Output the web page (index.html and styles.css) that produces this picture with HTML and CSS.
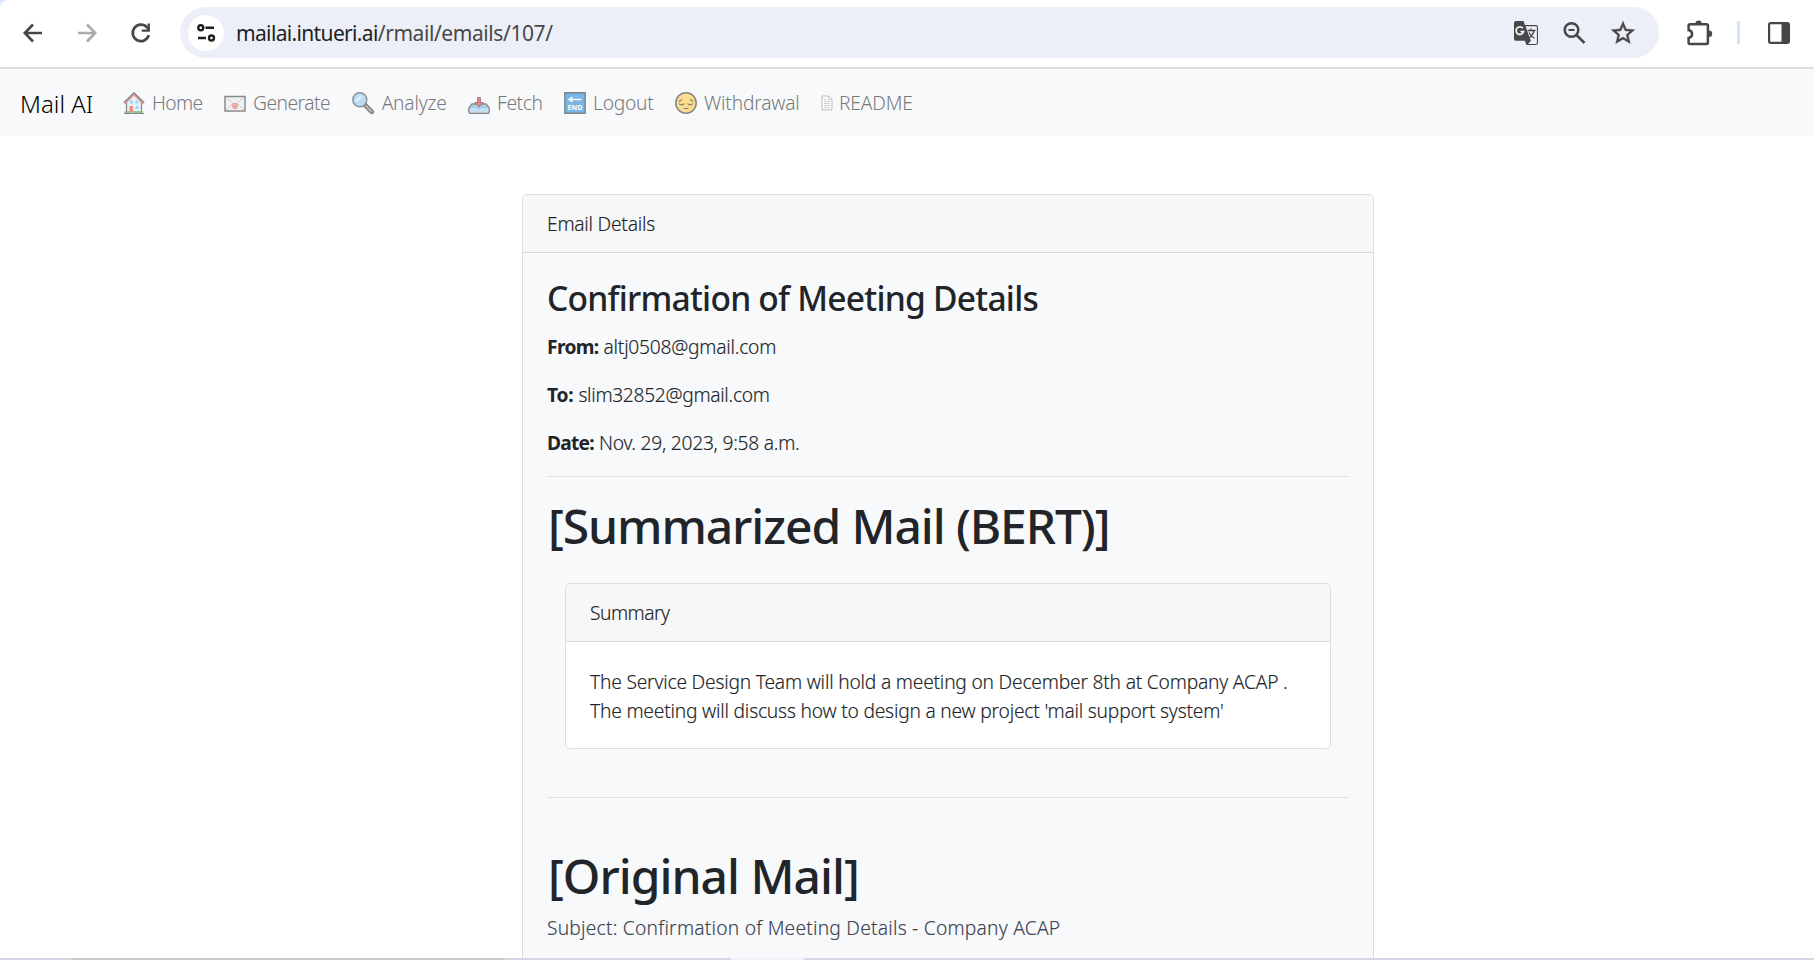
FILE: index.html
```
<!DOCTYPE html>
<html lang="en">
<head>
<meta charset="utf-8">
<title>Mail AI</title>
<link rel="stylesheet" href="styles.css">
</head>
<body>
<header class="toolbar">
  <div class="history">
    <svg class="ico" viewBox="0 0 24 24"><path d="M21 12H4M12 3.500 3.800 12l8.200 8.500" fill="none" stroke="#474747" stroke-width="2.600"/></svg>
    <svg class="ico" viewBox="0 0 24 24"><path d="M3 12h17M12 3.500 20.200 12 12 20.500" fill="none" stroke="#ababab" stroke-width="2.600"/></svg>
    <svg class="ico" viewBox="0 0 24 24"><path d="M19.800 14.200A8.200 8.200 0 1 1 18 6.400L20 8.600" fill="none" stroke="#474747" stroke-width="2.700"/><path d="M20.900 2.600v8.200h-8.200V8.400h5.800V2.600z" fill="#474747"/></svg>
  </div>
  <div class="omnibox">
    <span class="site-info">
      <svg width="20" height="20" viewBox="0 0 20 20" fill="none" stroke="#1f1f1f" stroke-width="2.400"><circle cx="4.800" cy="4.800" r="2.500"/><path d="M9.500 4.800H18M2 15h8"/><circle cx="15.500" cy="15" r="2.500"/></svg>
    </span>
    <span class="url"><span class="host">mailai.intueri.ai</span>/rmail/emails/107/</span>
    <div class="omni-actions">
      <svg width="26" height="26" viewBox="0 0 26 26"><path d="M3 1h7.500l1.400 4H23a2 2 0 0 1 2 2v16a2 2 0 0 1-2 2h-9.500l-1.700-4.200H3a2 2 0 0 1-2-2V3a2 2 0 0 1 2-2z" fill="#474747"/><path d="M12.500 6.200H23a.9.900 0 0 1 .9.900V23a.9.900 0 0 1-.9.900h-8l2.800-3.100z" fill="#eceff8"/><path d="M14.500 10.500h8M18 8.500v2M21 10.500c-.7 3.500-2.700 6-5.500 8M16 12.500c1.300 2.700 3.300 4.700 5.500 5.800M13.600 24l3.200-3.200" fill="none" stroke="#474747" stroke-width="1.300"/><path d="M9.800 8.200A3.800 3.800 0 1 0 10.600 11.600H7.500" fill="none" stroke="#eceff8" stroke-width="1.800"/></svg>
      <svg width="24" height="24" viewBox="0 0 24 24" fill="none" stroke="#474747" stroke-width="2.500"><circle cx="9.500" cy="9" r="6.800"/><path d="m14.500 14 8 8"/><path d="M6.500 9h6" stroke-width="2"/></svg>
      <svg width="28" height="28" viewBox="0 0 24 24"><path d="M22 9.240l-7.190-.62L12 2 9.190 8.630 2 9.240l5.460 4.730L5.820 21 12 17.270 18.180 21l-1.630-7.030L22 9.240zM12 15.400l-3.760 2.270 1-4.280-3.320-2.880 4.380-.38L12 6.100l1.710 4.040 4.380.38-3.320 2.880 1 4.280L12 15.400z" fill="#474747" stroke="#474747" stroke-width=".4"/></svg>
    </div>
  </div>
  <div class="tools">
    <svg width="28" height="28" viewBox="0 0 28 28"><path d="M5 5.200h16.500a1.400 1.400 0 0 1 1.400 1.400v17a1.400 1.400 0 0 1-1.400 1.400H5a1.400 1.400 0 0 1-1.400-1.400v-4.500c2.200-.4 3.500-2 3.500-4s-1.300-3.600-3.500-4V6.600A1.400 1.400 0 0 1 5 5.200z" fill="none" stroke="#474747" stroke-width="2.500"/><path d="M10.500 4.500a3.100 3.100 0 0 1 6.200 0zM24 11.500a3.200 3.200 0 0 1 0 6.400z" fill="#474747"/></svg>
    <span class="divider"></span>
    <svg width="22" height="22" viewBox="0 0 22 22"><rect x="1.100" y="1.100" width="19.800" height="19.800" rx="1.600" fill="none" stroke="#474747" stroke-width="2.200"/><path d="M13.500 1H20v20h-6.500z" fill="#474747"/></svg>
  </div>
</header>
<nav class="navbar">
  <span class="brand">Mail AI</span>
  <a class="item home"><svg viewBox="0 0 22 22"><path d="M3.500 10 11 2.500 18.500 10v10h-15z" fill="#eceff1" stroke="#858585" stroke-width="1.200"/><path d="M1.500 11.500 11 2l9.500 9.500" fill="none" stroke="#e99a90" stroke-width="2"/><path d="M.8 10.700 11 .7l10.200 10" fill="none" stroke="#858585" stroke-width="1.200"/><path d="M7 8.500h3v3H7zM12.500 8.500h3v3h-3zM12.500 14h3v3h-3z" fill="#93dcf5"/><path d="M6.500 14h3.500v6H6.500z" fill="#f08f80"/><path d="M1.500 19h4.500v2H1.500zM10.500 19H20v2h-9.500z" fill="#86c98a"/><path d="M1 21.500h20" stroke="#858585"/></svg><span>Home</span></a>
  <a class="item generate"><svg viewBox="0 0 22 22"><path d="M1 4.500h20v14.500H1z" fill="#f1f1f1" stroke="#8a8a8a" stroke-width="1.500"/><path d="m2 5.500 9 7 9-7M2 18l6.500-6.500M20 18l-6.500-6.500" fill="none" stroke="#cfcfcf"/><circle cx="11" cy="14" r="2.400" fill="#fbd9d4" stroke="#ee9488" stroke-width="1.200"/><circle cx="11.200" cy="14" r=".9" fill="#e8695c"/></svg><span>Generate</span></a>
  <a class="item analyze"><svg viewBox="0 0 22 22"><path d="m12.500 12.500 7.300 7.300" stroke="#7f7f7f" stroke-width="4.600" stroke-linecap="round"/><path d="m14 14 5.500 5.500" stroke="#b5b5b5" stroke-width="2" stroke-linecap="round"/><circle cx="7.800" cy="7.800" r="7" fill="#bcdcf4" stroke="#8b9096" stroke-width="1.400"/><path d="M4 9.500 9.500 4" stroke="#deeffb" stroke-width="2.500"/></svg><span>Analyze</span></a>
  <a class="item fetch"><svg viewBox="0 0 22 22"><path d="M4 12h14l3.200 4v3.500a2 2 0 0 1-2 2H2.800a2 2 0 0 1-2-2V16z" fill="#c3def2" stroke="#858585" stroke-width="1.300"/><path d="M4.500 12.700h13l2 3.300h-6.300c-.8 2.400-3.600 2.400-4.400 0H2.500z" fill="#a3cdec"/><path d="M9.500 5.500h3v5h2.800L11 15l-4.300-4.500h2.800z" fill="#ea7f80" stroke="#8d7478" stroke-width=".8"/></svg><span>Fetch</span></a>
  <a class="item logout"><svg viewBox="0 0 22 22"><path d="M.8.800h20.400v20.400H.8z" fill="#79b5e7" stroke="#7f8589" stroke-width="1.400"/><path d="M7 7.500h10.500M8.500 5.200 5.200 7.500l3.300 2.300" fill="none" stroke="#fff" stroke-width="1.500"/><text class="end" x="11" y="18" text-anchor="middle">END</text></svg><span>Logout</span></a>
  <a class="item withdrawal"><svg viewBox="0 0 22 22"><circle cx="11" cy="11" r="10.200" fill="#fbdc90" stroke="#858585" stroke-width="1.500"/><path d="M3.800 9.500 7 7.500M18.200 9.500 15 7.500M4.200 11.500c1 1.800 4 1.800 5 0M12.800 11.500c1 1.800 4 1.800 5 0M8.500 16.500h5" fill="none" stroke="#857d70" stroke-width="1.200"/></svg><span>Withdrawal</span></a>
  <a class="item readme"><svg viewBox="0 0 12 22"><path d="M1 4h6.500L11 7.500v10.300H1z" fill="#fdfdfd" stroke="#bdbdbd"/><path d="M7.500 4v3.500H11M3 9.500h6M3 11.500h6M3 13.500h6M3 15.500h6M3 7.500h2.500" fill="none" stroke="#c4c4c4" stroke-width=".8"/></svg><span>README</span></a>
</nav>
<main class="page">
  <section class="card">
    <div class="card-header details-title">Email Details</div>
    <div class="card-body">
      <h3>Confirmation of Meeting Details</h3>
      <p class="from"><b>From:</b> <span>altj0508@gmail.com</span></p>
      <p class="to"><b>To:</b> <span>slim32852@gmail.com</span></p>
      <p class="date"><b>Date:</b> <span>Nov. 29, 2023, 9:58 a.m.</span></p>
      <hr>
      <h1>[Summarized Mail (BERT)]</h1>
      <section class="card inner">
        <div class="card-header summary-title">Summary</div>
        <div class="card-body summary">The Service Design Team will hold a meeting on December 8th at Company ACAP .<br>The meeting will discuss how to design a new project 'mail support system'</div>
      </section>
      <hr>
      <h1 class="original">[Original Mail]</h1>
      <div class="subject">Subject: Confirmation of Meeting Details - Company ACAP</div>
    </div>
  </section>
</main>
<footer class="edge"><i class="thumb"></i><i class="light"></i></footer>
</body>
</html>
```

FILE: styles.css
```
* { box-sizing: border-box; }
html { background: #d8e5fd; }
body {
  margin: 0;
  height: 960px;
  overflow: hidden;
  display: flex;
  flex-direction: column;
  border-top-left-radius: 8px;
  background: #fff;
  color: #212529;
  font: 300 19.2px/28.8px "Noto Sans", "Open Sans", sans-serif;
}
svg { display: block; flex: none; }

.toolbar {
  display: flex;
  align-items: center;
  flex: none;
  height: 69px;
  padding: 7px 24px 9px 21px;
  border-bottom: 2px solid #dfe0e1;
}
.history { display: flex; gap: 30px; width: 159px; }
.ico { width: 24px; height: 24px; }
.omnibox {
  display: flex;
  align-items: center;
  width: 1479px;
  height: 51px;
  padding: 0 22px 0 8px;
  border-radius: 26px;
  background: #eceff8;
}
.site-info {
  display: grid;
  place-items: center;
  width: 36px;
  height: 36px;
  border-radius: 50%;
  background: #fff;
}
.url {
  margin-left: 12px;
  padding-top: 1px;
  font-size: 21px;
  font-weight: 400;
  letter-spacing: -.42px;
  color: #474747;
  white-space: nowrap;
}
.host { letter-spacing: -.65px; color: #1f1f1f; }
.omni-actions { display: flex; align-items: center; gap: 23px; margin-left: auto; }
.tools { display: flex; align-items: center; margin-left: 26px; }
.divider { width: 3px; height: 23px; margin: 0 28px 0 24px; background: #d3e3fd; }

.navbar {
  display: flex;
  align-items: center;
  flex: none;
  height: 67px;
  padding: 1px 19px 0;
  background: #f8f9fa;
  color: #77797b;
}
.brand { width: 104px; padding: 2px 0 0 1px; font-size: 24px; color: #000; }
.item { display: flex; align-items: center; margin-right: 21.5px; }
.item span { padding-top: 1px; }
.item svg { width: 22px; height: 22px; margin-right: 7px; }
.home { letter-spacing: -.6px; }
.generate { letter-spacing: -.5px; }
.analyze { letter-spacing: -.2px; }
.item.analyze svg { margin-right: 8px; }
.fetch { letter-spacing: -.4px; }
.logout { letter-spacing: -.25px; }
.withdrawal { letter-spacing: -.2px; }
.readme { letter-spacing: -.2px; }
.item.readme svg { width: 12px; margin-right: 6px; }
.end { font: 700 7px "Open Sans", sans-serif; letter-spacing: 0; fill: #fff; }

.page { flex: 1; min-height: 0; overflow: hidden; padding: 58px 0 0 522px; }
.card { width: 852px; border: 1px solid #dcdddf; border-radius: 5px; background: #f8f9fb; -webkit-text-stroke: .15px; }
.card-header {
  height: 58px;
  padding: 15.4px 24px 0;
  border-bottom: 1px solid #d8d9da;
  border-radius: 4px 4px 0 0;
  background: #f7f7f7;
}
.details-title { letter-spacing: -.23px; }
.summary-title { letter-spacing: -.5px; }
.card-body { padding: 25px 24px 24px; }
h1, h3 { margin: 0; font-weight: 500; -webkit-text-stroke: 0; }
h3 { margin-bottom: 14.5px; font-size: 33.6px; line-height: 40.3px; letter-spacing: -.77px; }
h1 { padding-left: 1px; font-size: 48px; line-height: 57.6px; letter-spacing: -1.1px; }
p { margin: 0 0 19.2px; }
b { font-weight: 700; -webkit-text-stroke: 0; }
.from b { letter-spacing: -.65px; }
.from span { letter-spacing: -.24px; }
.to b { letter-spacing: -.25px; }
.to span { letter-spacing: -.31px; }
.date { margin-bottom: 18.2px; }
.date b { letter-spacing: -.75px; }
.date span { letter-spacing: -.25px; }
hr { height: 1px; margin: 0 0 20.2px; border: 0; background: #dfe0e2; }
.inner { width: 766px; margin: 28px 0 48.6px 18px; background: #fff; }
.summary { padding-bottom: 23px; line-height: 29px; letter-spacing: -.2px; }
.original { margin: 49px 0 9.6px; letter-spacing: -1px; }
.subject { letter-spacing: .23px; color: #3d4350; }

.edge {
  position: absolute;
  left: 0;
  bottom: 0;
  display: flex;
  width: 100%;
  height: 2px;
  padding-left: 72px;
  background: #d8d6e6;
}
.thumb { width: 432px; background: #c8c8c8; }
.light { width: 73px; margin-left: 227px; background: #f0f0f7; }
```
